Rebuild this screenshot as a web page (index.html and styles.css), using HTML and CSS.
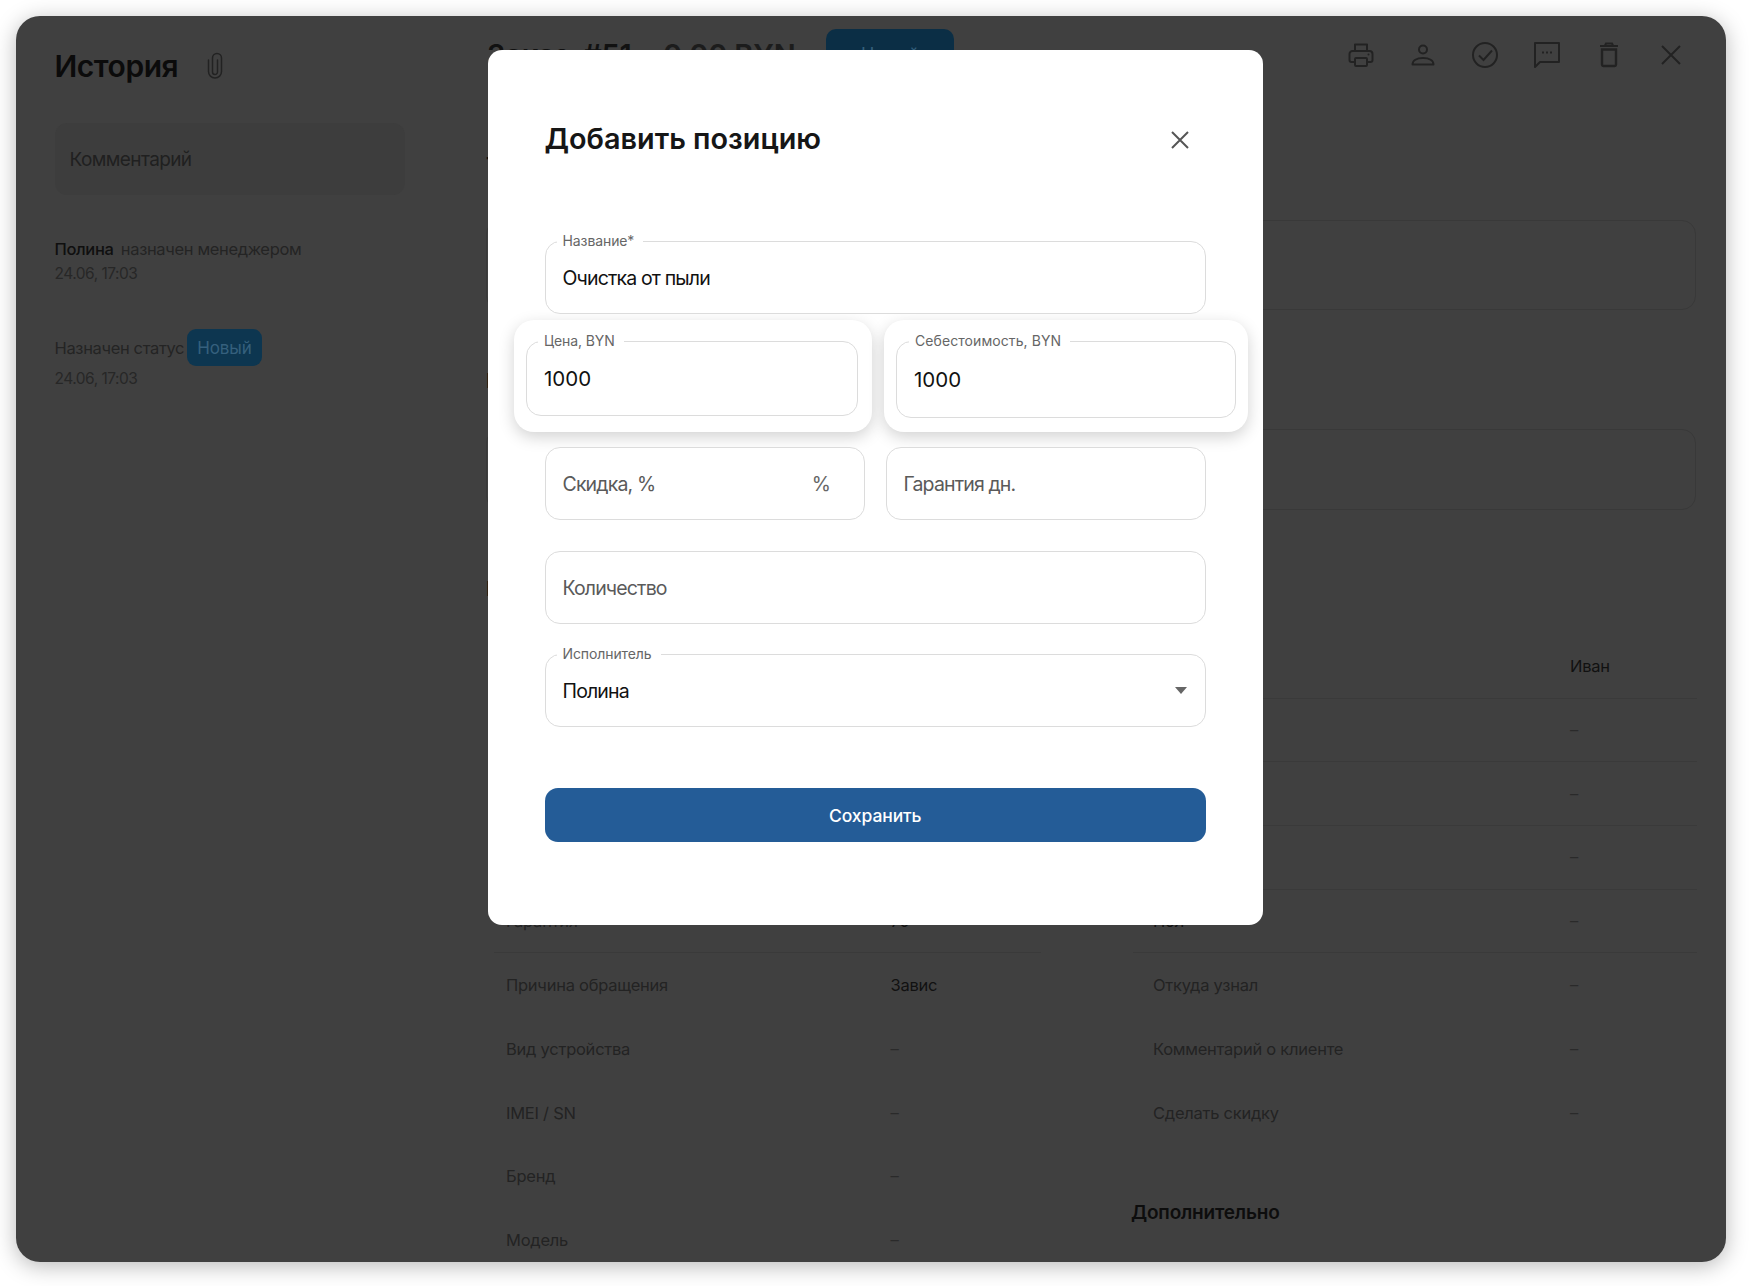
FILE: index.html
```html
<!DOCTYPE html>
<html lang="ru">
<head>
<meta charset="utf-8">
<title>Добавить позицию</title>
<link rel="stylesheet" href="styles.css">
</head>
<body>
<div class="window">
  <aside class="sidebar">
    <div class="side-head">
      <h2 class="side-title">История</h2>
      <svg class="clip" width="16" height="28" viewBox="0 0 16 28" fill="none"><path d="M1.500 8V19.500a6.500 6.500 0 0 0 13 0V6a4.500 4.500 0 0 0-9 0v14a2.500 2.500 0 0 0 5 0V8" stroke="#222" stroke-width="1.500" stroke-linecap="round"/></svg>
    </div>
    <div class="comment">Комментарий</div>
    <div class="entry first">
      <div class="entry-line"><b class="who">Полина</b> назначен менеджером</div>
      <div class="date">24.06, 17:03</div>
    </div>
    <div class="entry second">
      <div class="entry-status"><span>Назначен статус</span><span class="badge">Новый</span></div>
      <div class="date">24.06, 17:03</div>
    </div>
  </aside>
  <main class="main">
    <header class="head">
      <h1 class="order"><span class="o1">Заказ</span><span class="o2">#51</span><span class="o3">0.00 BYN</span></h1>
      <span class="chip">Новый</span>
      <div class="tools">
        <svg viewBox="0 0 28 28" fill="none" class="tool"><path d="M8 10V3.500h12V10M8 21H4.500a2 2 0 0 1-2-2v-6a3 3 0 0 1 3-3h17a3 3 0 0 1 3 3v6a2 2 0 0 1-2 2H20" stroke="#222" stroke-width="2" stroke-linejoin="round"/><rect x="8" y="17" width="12" height="8" rx="1" stroke="#222" stroke-width="2"/><circle cx="21.500" cy="13.500" r="1" fill="#222"/></svg>
        <svg viewBox="0 0 28 28" fill="none" class="tool"><circle cx="14" cy="8.500" r="4" stroke="#222" stroke-width="2"/><path d="M3.500 23.500c0-4 4-6.500 10.500-6.500s10.500 2.500 10.500 6.500z" stroke="#222" stroke-width="2" stroke-linejoin="round"/></svg>
        <svg viewBox="0 0 28 28" fill="none" class="tool"><circle cx="14" cy="14" r="12" stroke="#222" stroke-width="2"/><path d="M8 14.500l4.500 4.500L21 9.500" stroke="#222" stroke-width="2"/></svg>
        <svg viewBox="0 0 28 28" fill="none" class="tool"><path d="M2 2h24v19H7l-5 5z" stroke="#222" stroke-width="2" stroke-linejoin="round"/><path d="M9 11.500h2M13 11.500h2M17 11.500h2" stroke="#222" stroke-width="2"/></svg>
        <svg viewBox="0 0 28 28" fill="none" class="tool"><path d="M5 5h18M10 4.500L11 2.500h6l1 2" stroke="#222" stroke-width="2"/><path d="M7 8.500h14v15a1.500 1.500 0 0 1-1.500 1.500h-11A1.500 1.500 0 0 1 7 23.500z" stroke="#222" stroke-width="2.400"/></svg>
        <svg viewBox="0 0 28 28" fill="none" class="tool"><path d="M5 5l18 18M23 5L5 23" stroke="#222" stroke-width="2"/></svg>
      </div>
    </header>
    <h3 class="section s1">Товары</h3>
    <div class="box b1"></div>
    <h3 class="section s2">Итог</h3>
    <div class="box b2"></div>
    <h3 class="section s3">Инфо</h3>
    <div class="table">
      <div class="col left">
        <div class="row line"><span class="k">Тип</span><span class="v">Полина</span></div>
        <div class="row line"><span class="k">Исполнитель</span><span class="v">Полина</span></div>
        <div class="row line"><span class="k">Срок</span><span class="v">1 день</span></div>
        <div class="row line"><span class="k">Дата</span><span class="v">24.06</span></div>
        <div class="row line"><span class="k">Гарантия</span><span class="v">70</span></div>
        <div class="row"><span class="k">Причина обращения</span><span class="v">Завис</span></div>
        <div class="row"><span class="k">Вид устройства</span><span class="v dash">–</span></div>
        <div class="row"><span class="k">IMEI / SN</span><span class="v dash">–</span></div>
        <div class="row"><span class="k">Бренд</span><span class="v dash">–</span></div>
        <div class="row"><span class="k">Модель</span><span class="v dash">–</span></div>
      </div>
      <div class="col right">
        <div class="row line"><span class="k">Имя</span><span class="v">Иван</span></div>
        <div class="row line"><span class="k">Телефон</span><span class="v dash">–</span></div>
        <div class="row line"><span class="k">Email</span><span class="v dash">–</span></div>
        <div class="row line"><span class="k">Адрес</span><span class="v dash">–</span></div>
        <div class="row line"><span class="k strong">Пол</span><span class="v dash">–</span></div>
        <div class="row"><span class="k">Откуда узнал</span><span class="v dash">–</span></div>
        <div class="row"><span class="k">Комментарий о клиенте</span><span class="v dash">–</span></div>
        <div class="row"><span class="k">Сделать скидку</span><span class="v dash">–</span></div>
        <h3 class="extra">Дополнительно</h3>
      </div>
    </div>
  </main>

  <section class="modal">
    <div class="modal-head">
      <h2 class="modal-title">Добавить позицию</h2>
      <svg class="modal-close" width="20" height="20" viewBox="0 0 20 20" fill="none"><path d="M2 2l16 16M18 2L2 18" stroke="#555" stroke-width="2"/></svg>
    </div>
    <div class="field"><span class="legend">Название*</span><span class="value">Очистка от пыли</span></div>
    <div class="cards">
      <div class="card card-a"><div class="field tall-a"><span class="legend">Цена, BYN</span><span class="value num">1000</span></div></div>
      <div class="card card-b"><div class="field tall-b"><span class="legend">Себестоимость, BYN</span><span class="value num">1000</span></div></div>
    </div>
    <div class="pair">
      <div class="field half-a"><span class="hint">Скидка, %</span><span class="suffix">%</span></div>
      <div class="field half-b"><span class="hint">Гарантия дн.</span></div>
    </div>
    <div class="field gap-a"><span class="hint">Количество</span></div>
    <div class="field gap-b"><span class="legend">Исполнитель</span><span class="value">Полина</span><span class="arrow"></span></div>
    <button class="save" type="button">Сохранить</button>
  </section>
</div>
</body>
</html>
```
FILE: styles.css
```css
* { box-sizing: border-box; }
html, body { margin: 0; padding: 0; background: #fff; }
body { font-family: Inter, "Liberation Sans", sans-serif; width: 1750px; height: 1286px; overflow: hidden; padding: 16px 0 0 16px; }
h1, h2, h3 { margin: 0; }

.window { position: relative; width: 1710px; height: 1246px; background: #404040; border-radius: 24px; display: flex; box-shadow: 0 4px 22px rgba(0,0,0,.28); }

.sidebar { width: 470px; flex: none; padding: 32px 0 0 38.500px; }
.side-head { display: flex; align-items: center; height: 36px; gap: 29px; }
.side-title { font-size: 30px; font-weight: 600; letter-spacing: -.45px; color: #0b0b0b; line-height: 36px; }
.clip { flex: none; }
.comment { width: 350px; height: 72px; margin-top: 39px; background: #3d3d3d; border-radius: 12px; padding-left: 15px; display: flex; align-items: center; font-size: 19px; letter-spacing: -.6px; color: #202020; }
.entry { font-size: 16.500px; letter-spacing: -.35px; color: #242424; }
.first { margin-top: 42px; }
.second { margin-top: 43px; }
.entry-line { line-height: 24px; }
.who { font-weight: 500; color: #0f0f0f; margin-right: 3px; }
.date { line-height: 24px; font-size: 15.500px; letter-spacing: -.5px; color: #272727; margin-top: 1px; }
.entry-status { display: flex; align-items: center; gap: 3px; height: 37px; }
.badge { display: inline-flex; align-items: center; height: 37px; padding: 0 10px; border-radius: 9px; background: #0d3650; color: #35607d; font-size: 17px; letter-spacing: -.1px; }

.main { flex: 1; height: 1246px; overflow: hidden; border-radius: 0 24px 24px 0; }
.head { display: flex; align-items: center; padding: 13px 0 0 0; height: 63px; }
.order { font-size: 29px; font-weight: 600; letter-spacing: -.2px; color: #111; line-height: 50px; display: flex; padding-top: 2px; }
.o1 { margin-left: 1px; width: 96px; }
.o2 { width: 80px; }
.o3 { color: #1c1c1c; width: 163px; }
.chip { width: 128px; height: 50px; background: #0b2e45; border-radius: 10px; color: #35607d; font-size: 18px; display: flex; align-items: center; justify-content: center; }
.tools { margin-left: auto; display: flex; gap: 34px; padding: 2px 41px 0 0; }
.tool { width: 28px; height: 28px; }

.section { font-size: 20px; font-weight: 600; color: #0b0b0b; line-height: 28px; }
.s1 { margin-top: 72px; }
.s2 { margin-top: 57px; }
.s3 { margin-top: 65px; }
.box { width: 1210px; border: 1px solid #393939; border-radius: 14px; }
.b1 { height: 90px; margin-top: 41px; }
.b2 { height: 81px; margin-top: 34px; }

.table { display: flex; align-items: flex-start; margin: 32px 0 0 8px; gap: 92px; }
.col { flex: none; }
.left { width: 547px; --key: 384.500px; }
.right { width: 564px; --key: 417px; }
.row { height: 63.700px; display: flex; align-items: center; font-size: 16.500px; letter-spacing: -.25px; color: #232323; }
.left .row { padding-left: 12px; }
.right .row { padding-left: 20px; }
.line { border-bottom: 1px solid #3a3a3a; }
.k { width: var(--key); flex: none; }
.v { color: #111; }
.dash { color: #2a2a2a; }
.strong { color: #111; }
.extra { margin-top: 54px; font-size: 19px; font-weight: 600; letter-spacing: -.2px; line-height: 28px; color: #0d0d0d; margin-left: -2px; }

.modal { position: absolute; left: 472px; top: 34px; width: 775px; height: 875px; background: #fff; border-radius: 14px; padding: 56px 57px 0 56.500px; }
.modal-head { display: flex; align-items: center; justify-content: space-between; height: 64px; padding: 0 16px 0 0; margin-bottom: 71px; }
.modal-title { font-size: 28.800px; font-weight: 600; color: #161616; line-height: 64px; padding-top: 1px; }
.modal-close { margin-top: 3px; }

.field { position: relative; height: 72.500px; display: flex; align-items: center; padding: 1px 17px 0; border: 1px solid #dcdcdc; border-radius: 15px; background: #fff; font-size: 19.500px; letter-spacing: -.85px; }
.legend { position: absolute; top: -10px; left: 11px; padding: 0 9px 0 6px; background: #fff; font-size: 14px; letter-spacing: -.1px; line-height: 18px; color: #666; }
.value { color: #111; }
.num { font-size: 20.500px; letter-spacing: 0; }
.hint { color: #5a5a5a; }
.suffix { margin-left: auto; color: #666; padding-right: 16px; letter-spacing: 0; }
.arrow { margin-left: auto; margin-right: 1px; width: 0; height: 0; border-left: 6px solid transparent; border-right: 6px solid transparent; border-top: 7px solid #666; }

.cards { display: flex; gap: 12px; margin: 6.500px -42px 15px -30.500px; }
.card { background: #fff; border-radius: 20px; box-shadow: 0 5px 16px rgba(0,0,0,.18); height: 112px; padding: 21px 0 0 12px; }
.card-a { width: 358px; }
.card-b { width: 364px; }
.tall-a { width: 331.500px; height: 75px; padding-top: 0; }
.tall-b { width: 340px; height: 77px; padding-top: 0; }
.tall-b .legend { left: 12px; letter-spacing: .08px; }

.pair { display: flex; gap: 20.500px; }
.half-a { width: 320.500px; }
.half-b { width: 320.500px; }
.gap-a { margin-top: 31.500px; }
.gap-b { margin-top: 30.500px; }
.save { display: block; width: 100%; height: 54px; margin-top: 61.500px; border: 0; border-radius: 13px; background: #245c97; color: #fff; font: 500 17.500px Inter, "Liberation Sans", sans-serif; letter-spacing: -.1px; }
```
